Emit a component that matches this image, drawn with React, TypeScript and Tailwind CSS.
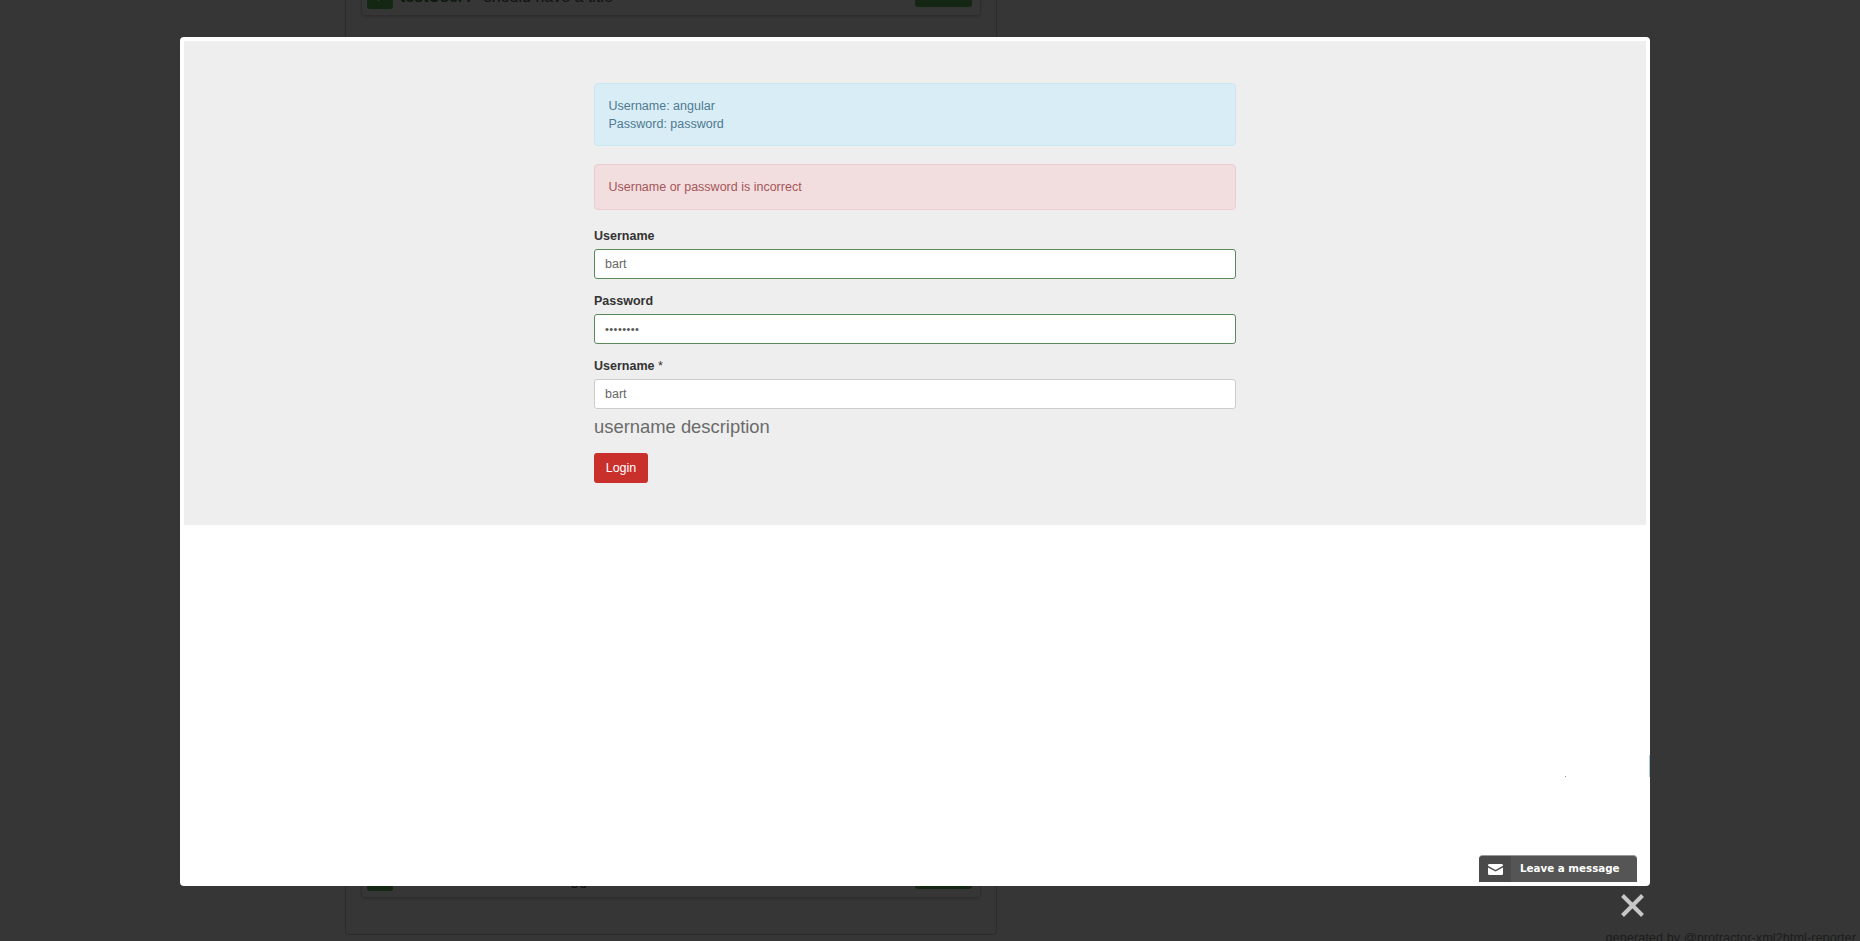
function Row({ text, className, buttonClass, textClass }: { text: string; className: string; buttonClass: string; textClass: string }) {
  return (
    <div className={`border border-[#d4d4d4] rounded-[4px] shadow-[0_1px_3px_rgba(0,0,0,0.15)] px-[5px] flex justify-between ${className}`}>
      <div className="flex items-start">
        <div className="w-[26px] h-[26px] bg-[#5cb85c] rounded-[3px] flex items-center justify-center">
          <svg width="14" height="14" viewBox="0 0 14 14"><path d="M2 7l3.500 3.500L12 3" fill="none" stroke="#fff" strokeWidth="2.500"/></svg>
        </div>
        <div className={`ml-[7px] text-[16px] leading-[26px] text-[#555] whitespace-nowrap ${textClass}`}>
          <span className="font-bold text-[#3c763d] mr-[10px]">testUser?</span>
          {text}
        </div>
      </div>
      <div className={`w-[57px] h-[24px] bg-[#5cb85c] rounded-[3px] mr-[3px] ${buttonClass}`}></div>
    </div>
  );
}

export default function App() {
  const sans = { fontFamily: '"Liberation Sans", Arial, sans-serif' };
  return (
    <div className="relative w-[1860px] h-[941px] overflow-hidden bg-white text-[14px]" style={sans}>
      {/* page behind */}
      <div className="w-[652px] ml-[345px] -mt-[30px] h-[965px] border border-[#ccc] rounded-[4px] px-[15px] pt-[18px] flex flex-col justify-between">
        <Row text="should have a title" className="h-[27px] items-end pb-[6px]" buttonClass="mb-[2px]" textClass="translate-y-[1px]" />
        <Row text="should be logged in" className="h-[36px] mb-[36px] pt-[2px]" buttonClass="" textClass="translate-y-[2px]" />
      </div>
      <div className="-mt-[7px] pr-[4px] text-right text-[12.8px] leading-[20px] text-[#888]">generated by @protractor-xml2html-reporter</div>
      {/* backdrop */}
      <div className="absolute inset-0 bg-black opacity-[0.79]"></div>
      {/* modal */}
      <div className="absolute left-[180px] top-[37px] w-[1470px] h-[849px] bg-white rounded-[4px] p-[4px]">
        <div className="bg-[#eeeeee] h-[484px] pt-[42px] pl-[410px]">
          <div className="w-[642px]">
            <div className="h-[63px] bg-[#d9edf7] border border-[#c9e6f3] rounded-[4px] px-[13.5px] pt-[13px] text-[#4f7a90] text-[12.5px] leading-[18px]">
              <div>Username: angular</div>
              <div>Password: password</div>
            </div>
            <div className="h-[46px] mt-[18px] bg-[#f2dede] border border-[#ebccd1] rounded-[4px] px-[13.5px] flex items-center text-[#a5555a] text-[12.5px]">
              Username or password is incorrect
            </div>
            <div className="mt-[17px] font-bold text-[12.5px] leading-[18px] text-[#333]">Username</div>
            <div className="mt-[4px] h-[30px] bg-white border border-[#5a8a5b] rounded-[3px] px-[10px] flex items-center text-[#666] text-[12.5px]">bart</div>
            <div className="mt-[13px] font-bold text-[12.5px] leading-[18px] text-[#333]">Password</div>
            <div className="mt-[4px] h-[30px] bg-white border border-[#5a8a5b] rounded-[3px] px-[10px] flex items-center text-[#555] text-[11px] tracking-[0.45px]">••••••••</div>
            <div className="mt-[13px] text-[12.5px] leading-[18px] text-[#333]"><span className="font-bold">Username</span> *</div>
            <div className="mt-[4px] h-[30px] bg-white border border-[#ccc] rounded-[3px] px-[10px] flex items-center text-[#666] text-[12.5px]">bart</div>
            <div className="mt-[5px] text-[18.4px] leading-[26px] text-[#6b6b6b]">username description</div>
            <div className="mt-[13px] w-[54px] h-[30px] bg-[#c9302c] rounded-[3px] flex items-center justify-center text-white text-[12.5px]">Login</div>
          </div>
        </div>
      </div>
      {/* stray marks on the modal edge */}
      <div className="absolute left-[1649px] top-[755px] w-[1px] h-[22px] bg-[#a9c9dc]"></div>
      <div className="absolute left-[1565px] top-[776px] w-[1px] h-[1px] bg-[#999]"></div>
      {/* chat widget */}
      <div className="absolute left-[1479px] top-[855px] w-[158px] h-[27px] bg-[#555] border-t border-[#999] rounded-t-[4px] flex items-center text-white font-bold text-[10.3px]" style={{ fontFamily: '"DejaVu Sans", sans-serif' }}>
        <div className="w-[32px] h-full bg-[#4a4a4a] rounded-tl-[4px] flex items-center justify-center">
          <svg width="15" height="11" viewBox="0 0 15 12" preserveAspectRatio="none"><path d="M1.500 0h12A1.500 1.500 0 0 1 15 1.500V2L7.500 6.500 0 2v-.5A1.500 1.500 0 0 1 1.500 0z" fill="#fff"/><path d="M0 3.700l7.500 4.500L15 3.700v6.800a1.500 1.500 0 0 1-1.500 1.500h-12A1.500 1.500 0 0 1 0 10.500z" fill="#fff"/></svg>
        </div>
        <span className="ml-[9px]">Leave a message</span>
      </div>
      {/* close */}
      <svg className="absolute left-[1620px] top-[893px]" width="25" height="25" viewBox="0 0 25 25"><path d="M2.500 2.500L22.500 22.500M22.500 2.500L2.500 22.500" stroke="#c8c8c8" strokeWidth="4"/></svg>
    </div>
  );
}
